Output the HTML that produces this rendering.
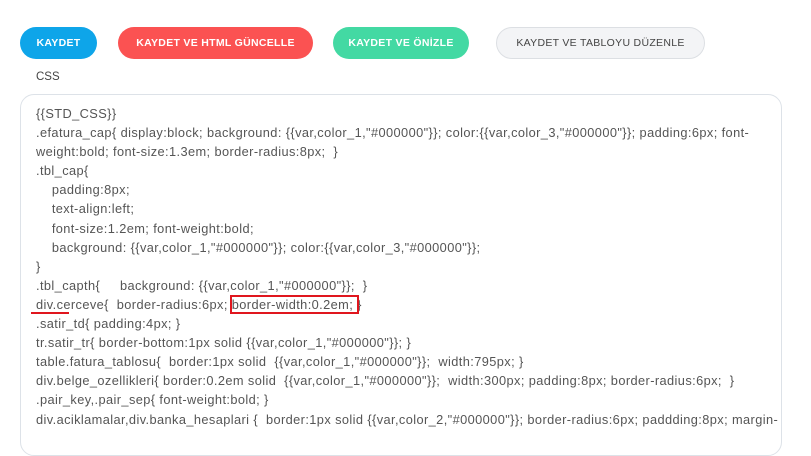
<!DOCTYPE html>
<html><head><meta charset="utf-8"><style>
html,body{margin:0;width:811px;height:427px;overflow:hidden;background:#fff;font-family:"Liberation Sans",sans-serif;}
.btn{position:absolute;top:27px;height:32px;border-radius:16px;color:#fff;font-weight:bold;font-size:10.5px;letter-spacing:.3px;display:flex;align-items:center;justify-content:center;}
.lbl{position:absolute;left:36px;top:71px;font-size:11.5px;color:#444;}
.ta{position:absolute;left:20px;top:94px;width:760px;height:360px;border:1px solid #dde2e8;border-radius:14px;}
.code{position:absolute;left:36px;top:104px;font-size:12.8px;letter-spacing:0.4px;color:#555;line-height:19.1px;white-space:pre;}
.box{outline:2px solid #e0161e;outline-offset:0px;}
.ul{position:absolute;left:31px;top:312px;width:38px;height:2px;background:#e0161e;}
</style></head><body>
<div class="btn" style="left:20px;width:77px;background:#0ea5e9">KAYDET</div>
<div class="btn" style="left:118px;width:195px;background:#fb5252">KAYDET VE HTML GÜNCELLE</div>
<div class="btn" style="left:333px;width:136px;background:#43d9a3">KAYDET VE ÖNİZLE</div>
<div class="btn" style="left:496px;width:209px;background:#f3f4f6;color:#444;font-weight:normal;border:1px solid #dcdfe3;box-sizing:border-box">KAYDET VE TABLOYU DÜZENLE</div>
<div class="lbl">CSS</div>
<div class="ta"></div>
<div class="code">{{STD_CSS}}
.efatura_cap{ display:block; background: {{var,color_1,"#000000"}}; color:{{var,color_3,"#000000"}}; padding:6px; font-
weight:bold; font-size:1.3em; border-radius:8px;  }
.tbl_cap{
    padding:8px;
    text-align:left;
    font-size:1.2em; font-weight:bold;
    background: {{var,color_1,"#000000"}}; color:{{var,color_3,"#000000"}};
}
.tbl_capth{     background: {{var,color_1,"#000000"}};  }
div.cerceve{  border-radius:6px; <span class="box">border-width:0.2em; </span>}
.satir_td{ padding:4px; }
tr.satir_tr{ border-bottom:1px solid {{var,color_1,"#000000"}}; }
table.fatura_tablosu{  border:1px solid  {{var,color_1,"#000000"}};  width:795px; }
div.belge_ozellikleri{ border:0.2em solid  {{var,color_1,"#000000"}};  width:300px; padding:8px; border-radius:6px;  }
.pair_key,.pair_sep{ font-weight:bold; }
div.aciklamalar,div.banka_hesaplari {  border:1px solid {{var,color_2,"#000000"}}; border-radius:6px; paddding:8px; margin-</div>
<div class="ul"></div>
</body></html>
